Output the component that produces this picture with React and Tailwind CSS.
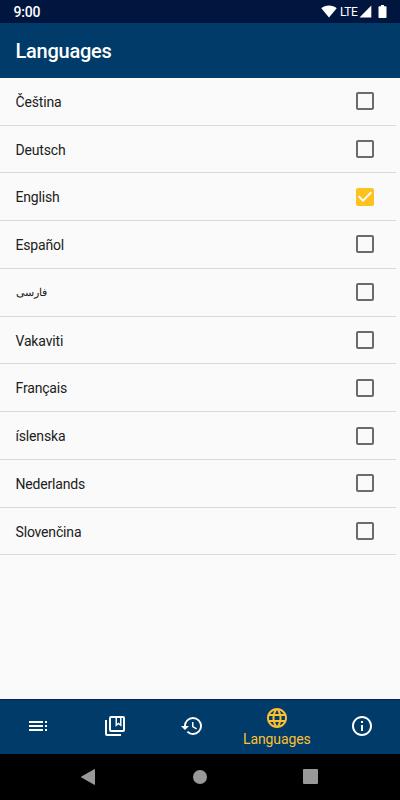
import React from "react";

const languages = [
  "Čeština",
  "Deutsch",
  "English",
  "Español",
  "فارسی",
  "Vakaviti",
  "Français",
  "íslenska",
  "Nederlands",
  "Slovenčina",
];

const paths = {
  toc: "M3 9h14V7H3v2zm0 4h14v-2H3v2zm0 4h14v-2H3v2zm16 0h2v-2h-2v2zm0-10v2h2V7h-2zm0 6h2v-2h-2v2z",
  history:
    "M13 3a9 9 0 0 0-9 9H1l3.890 3.890.07.14L9 12H6c0-3.870 3.130-7 7-7s7 3.130 7 7-3.130 7-7 7c-1.930 0-3.680-.79-4.940-2.060l-1.420 1.420A8.954 8.954 0 0 0 13 21a9 9 0 0 0 0-18zm-1 5v5l4.280 2.540.72-1.210-3.500-2.080V8H12z",
  globe:
    "M11.990 2C6.470 2 2 6.480 2 12s4.470 10 9.990 10C17.520 22 22 17.520 22 12S17.520 2 11.990 2zm6.930 6h-2.950a15.650 15.650 0 0 0-1.380-3.560A8.030 8.030 0 0 1 18.920 8zM12 4.040c.83 1.200 1.480 2.530 1.910 3.960h-3.820c.43-1.430 1.080-2.760 1.910-3.960zM4.260 14C4.100 13.360 4 12.690 4 12s.1-1.360.26-2h3.380c-.08.66-.14 1.320-.14 2s.06 1.340.14 2H4.260zm.82 2h2.950c.32 1.250.78 2.450 1.380 3.560A7.987 7.987 0 0 1 5.080 16zm2.950-8H5.080a7.987 7.987 0 0 1 4.330-3.560A15.650 15.650 0 0 0 8.030 8zM12 19.960c-.83-1.200-1.480-2.530-1.910-3.960h3.820c-.43 1.430-1.080 2.760-1.910 3.960zM14.340 14H9.660c-.09-.66-.16-1.320-.16-2s.07-1.350.16-2h4.680c.09.65.16 1.320.16 2s-.07 1.340-.16 2zm.25 5.560c.6-1.110 1.060-2.310 1.380-3.560h2.950a8.030 8.030 0 0 1-4.330 3.560zM16.360 14c.08-.66.14-1.320.14-2s-.06-1.340-.14-2h3.380c.16.64.26 1.310.26 2s-.1 1.360-.26 2h-3.380z",
  info: "M11 7h2v2h-2V7zm0 4h2v6h-2v-6zm1-9C6.480 2 2 6.480 2 12s4.480 10 10 10 10-4.480 10-10S17.520 2 12 2zm0 18c-4.410 0-8-3.590-8-8s3.590-8 8-8 8 3.590 8 8-3.590 8-8 8z",
  unchecked:
    "M19 5v14H5V5h14m0-2H5c-1.100 0-2 .9-2 2v14c0 1.100.9 2 2 2h14c1.100 0 2-.9 2-2V5c0-1.100-.9-2-2-2z",
  checked:
    "M19 3H5c-1.110 0-2 .9-2 2v14c0 1.100.89 2 2 2h14c1.110 0 2-.9 2-2V5c0-1.100-.89-2-2-2zm-9 14l-5-5 1.410-1.410L10 14.170l7.590-7.590L19 8l-9 9z",
};

function Icon({ name, className = "" }) {
  return (
    <svg viewBox="0 0 24 24" fill="currentColor" className={`size-6 shrink-0 ${className}`}>
      <path d={paths[name]} />
    </svg>
  );
}

function BookmarksIcon() {
  return (
    <svg viewBox="0 0 24 24" fill="none" stroke="currentColor" className="size-6 shrink-0">
      <path strokeWidth="2" d="M3 6v14a1 1 0 0 0 1 1h14" />
      <rect strokeWidth="2" x="7" y="3" width="14" height="14" rx="1" />
      <path strokeWidth="1.5" d="M13.250 4v7.300l2.250-1.800 2.250 1.800V4" />
    </svg>
  );
}

function StatusBar() {
  return (
    <div className="flex h-[23px] shrink-0 items-center justify-between bg-[#00163f] pr-[13px] pl-[13.5px] text-white">
      <span className="mt-px text-[14px] leading-4 font-medium tracking-[-0.2px]">9:00</span>
      <div className="flex items-center">
        <svg className="h-[13px] w-4" viewBox="0 0 16 13" fill="currentColor">
          <path d="M8 12.500 0.300 3.200C2.400 1.500 5 .6 8 .6s5.600.9 7.700 2.600z" />
        </svg>
        <span className="ml-[3px] w-[17px] text-[12px] leading-4 tracking-[-0.5px]">LTE</span>
        <svg className="ml-[2px] h-[13px] w-[13px]" viewBox="0 0 13 13" fill="currentColor">
          <path d="M12.300.500v12H.500z" />
        </svg>
        <svg className="ml-[6px] h-[13px] w-[9px]" viewBox="0 0 9 13" fill="currentColor">
          <path d="M3 0h3v1.300h1.800c.4 0 .7.3.7.7v10.300c0 .4-.3.7-.7.7H1.200c-.4 0-.7-.3-.7-.7V2c0-.4.3-.7.7-.7H3z" />
        </svg>
      </div>
    </div>
  );
}

function NavItem({ children }) {
  return (
    <button className="flex w-[76.800px] shrink-0 items-center justify-center pb-[1.500px] text-white">
      {children}
    </button>
  );
}

export default function App() {
  return (
    <div className="flex h-[800px] w-[400px] flex-col overflow-hidden bg-[#fafafa] font-['Roboto','Noto_Sans',sans-serif]">
      <StatusBar />
      <header className="flex h-[54.500px] shrink-0 items-center bg-[#003b69] pl-[15.500px]">
        <h1 className="mt-[1.500px] text-[20px] leading-6 font-medium tracking-[-0.25px] text-white">Languages</h1>
      </header>
      <ul className="mr-1 flex-1 pt-[0.300px]">
        {languages.map((language) => (
          <li
            key={language}
            className="flex h-[47.780px] items-center justify-between border-b border-[#dadada] pr-[19px] pl-[15.500px]"
          >
            {language === "فارسی" ? (
              <span lang="fa" className="mt-[2px] text-[11.300px] leading-5 text-[#202020]">{language}</span>
            ) : (
              <span className="mt-[1.200px] text-[14px] leading-5 tracking-[-0.170px] text-[#202020]">{language}</span>
            )}
            {language === "English" ? (
              <Icon name="checked" className="text-[#ffc120]" />
            ) : (
              <Icon name="unchecked" className="text-[#6b6b6b]" />
            )}
          </li>
        ))}
      </ul>
      <nav className="flex h-[54.500px] shrink-0 border-t border-[#00265a] bg-[#003b69]">
        <NavItem>
          <Icon name="toc" />
        </NavItem>
        <NavItem>
          <BookmarksIcon />
        </NavItem>
        <NavItem>
          <Icon name="history" />
        </NavItem>
        <button className="flex flex-1 flex-col items-center text-[#fdc02f]">
          <Icon name="globe" className="mt-[5.500px]" />
          <span className="text-[14px] leading-[18px] tracking-[-0.1px]">Languages</span>
        </button>
        <NavItem>
          <Icon name="info" />
        </NavItem>
      </nav>
      <div className="flex h-[46.500px] shrink-0 items-center justify-between bg-black pr-[82px] pl-[81px] text-[#999999]">
        <svg className="h-4 w-[14px]" viewBox="0 0 14 16" fill="currentColor">
          <path d="M13.200.2c.4-.2.8 0 .8.500v14.600c0 .5-.4.7-.8.5L.4 8.500c-.4-.3-.4-.7 0-1z" />
        </svg>
        <div className="ml-px size-[14px] rounded-full bg-[#999999]" />
        <div className="size-[15px] rounded-[1px] bg-[#999999]" />
      </div>
    </div>
  );
}
